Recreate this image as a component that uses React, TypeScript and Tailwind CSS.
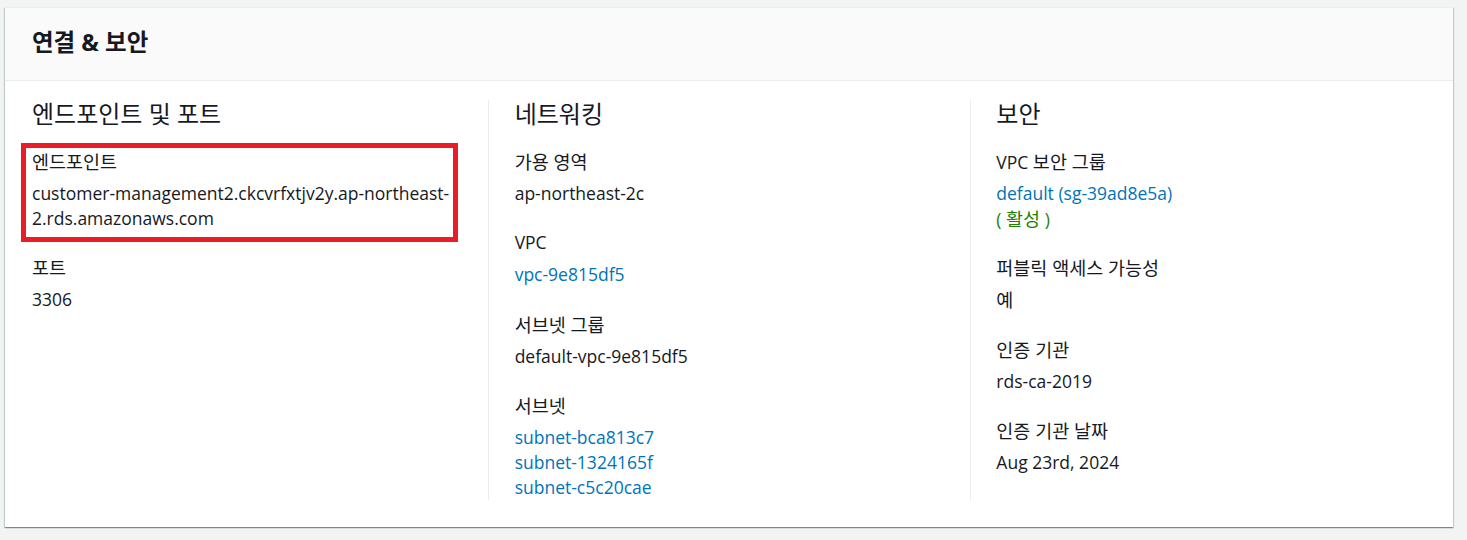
import React from "react";

const K = ({ children }: { children: React.ReactNode }) => (
  <span className="text-[18.5px]">{children}</span>
);

const Label = ({ children }: { children: React.ReactNode }) => (
  <div className="leading-[25px] h-[25px] text-[#16191f]">{children}</div>
);

const Value = ({ children, className = "" }: { children: React.ReactNode; className?: string }) => (
  <div className={`mt-[7px] leading-[25px] ${className}`}>{children}</div>
);

const Item = ({ children }: { children: React.ReactNode }) => (
  <div className="mt-[24.25px]">{children}</div>
);

const Heading = ({ children }: { children: React.ReactNode }) => (
  <h3 className="text-[24px] leading-[27px] h-[27px] font-normal text-[#16191f] mb-[22px]">{children}</h3>
);

export default function App() {
  return (
    <div
      className="min-h-[540px] w-[1467px] bg-[#f2f3f3] pt-[7px] pl-[5px] text-[17.5px] text-[#16191f]"
      style={{ fontFamily: '"Open Sans", "Noto Sans CJK KR", sans-serif' }}
    >
      <div className="w-[1448px] bg-white border-t border-[#eaeded] shadow-[0_1px_1px_0_rgba(0,28,36,0.3),1px_1px_1px_0_rgba(0,28,36,0.15),-1px_1px_1px_0_rgba(0,28,36,0.15)]">
        <div className="h-[73px] bg-[#fafafa] border-b border-[#eaeded] flex items-center pl-[27px]">
          <h2 className="text-[23.5px] font-bold leading-[27px] text-[#16191f] -mt-[3px]">연결 &amp; 보안</h2>
        </div>
        <div className="grid grid-cols-3 pt-[19px] pb-[27px]">
          <div className="pl-[27px] pr-[10px]">
            <Heading>엔드포인트 및 포트</Heading>
            <div className="relative">
              <div className="absolute left-[-11px] top-[-6px] w-[437px] h-[99px] border-[5px] border-[#ea1d27] pointer-events-none" />
              <Label><K>엔드포인트</K></Label>
              <Value>
                customer-management2.ckcvrfxtjv2y.ap-northeast-
                <br />
                2.rds.amazonaws.com
              </Value>
            </div>
            <Item>
              <Label><K>포트</K></Label>
              <Value>3306</Value>
            </Item>
          </div>
          <div className="border-l border-[#eaeded] pl-[26px] pr-[10px]">
            <Heading>네트워킹</Heading>
            <Label><K>가용 영역</K></Label>
            <Value>ap-northeast-2c</Value>
            <Item>
              <Label>VPC</Label>
              <Value className="text-[#0073bb]">vpc-9e815df5</Value>
            </Item>
            <Item>
              <Label><K>서브넷 그룹</K></Label>
              <Value>default-vpc-9e815df5</Value>
            </Item>
            <Item>
              <Label><K>서브넷</K></Label>
              <Value className="text-[#0073bb]">
                <div>subnet-bca813c7</div>
                <div>subnet-1324165f</div>
                <div>subnet-c5c20cae</div>
              </Value>
            </Item>
          </div>
          <div className="border-l border-[#eaeded] pl-[25px] pr-[10px]">
            <Heading>보안</Heading>
            <Label>VPC <K>보안 그룹</K></Label>
            <Value>
              <div className="text-[#0073bb]">default (sg-39ad8e5a)</div>
              <div className="text-[#1d8102] h-[25px]">( <K>활성</K> )</div>
            </Value>
            <Item>
              <Label><K>퍼블릭 액세스 가능성</K></Label>
              <Value className="h-[25px]"><K>예</K></Value>
            </Item>
            <Item>
              <Label><K>인증 기관</K></Label>
              <Value>rds-ca-2019</Value>
            </Item>
            <Item>
              <Label><K>인증 기관 날짜</K></Label>
              <Value>Aug 23rd, 2024</Value>
            </Item>
          </div>
        </div>
      </div>
    </div>
  );
}
